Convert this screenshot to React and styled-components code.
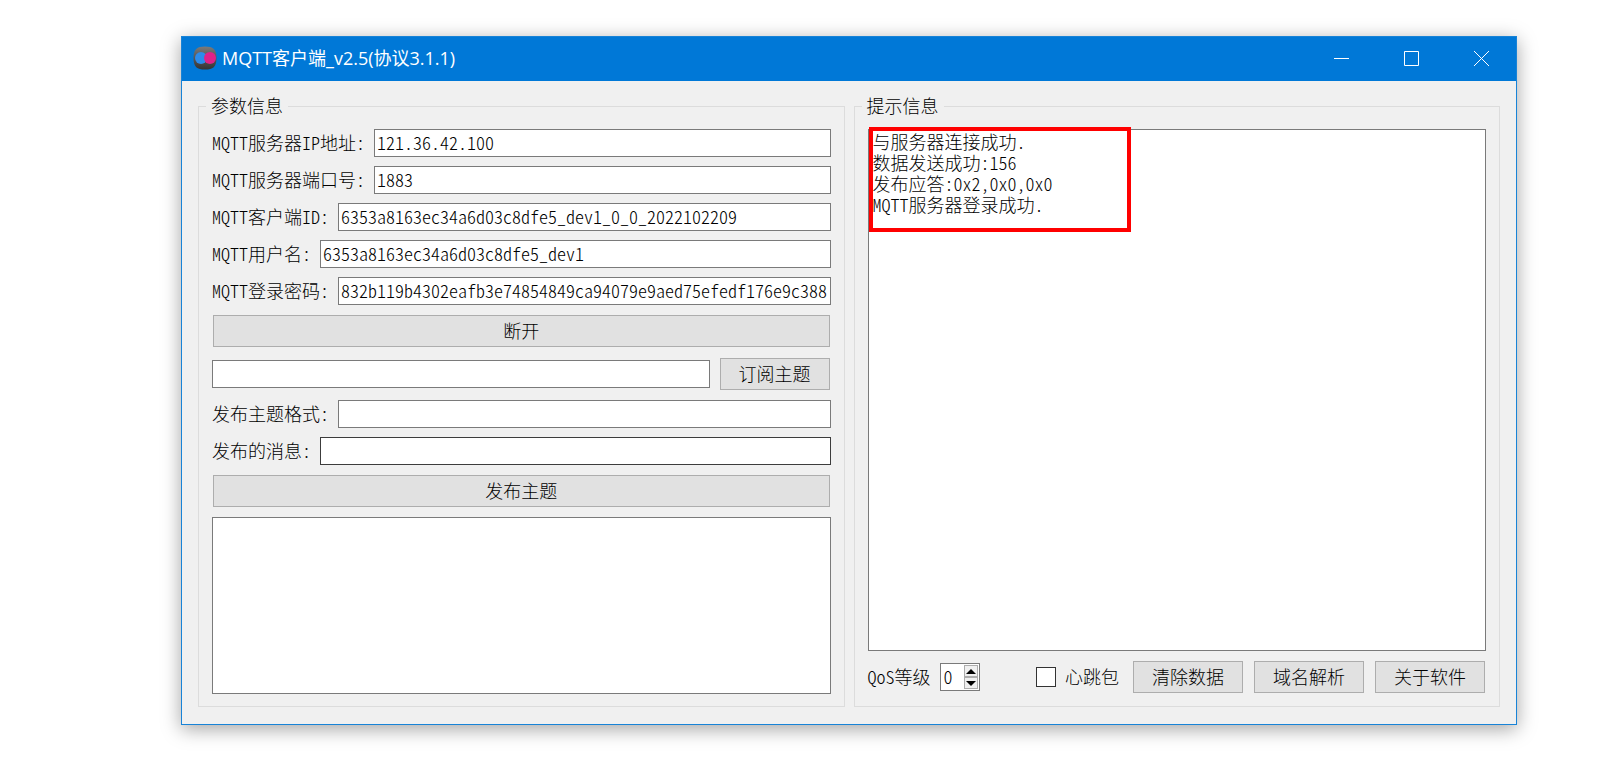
import React from "react";
import styled, { createGlobalStyle } from "styled-components";

const GlobalStyle = createGlobalStyle`
  *, *::before, *::after { box-sizing: border-box; }
  body { margin: 0; background: #fff; }
  button, input, textarea { font: inherit; color: inherit; margin: 0; border-radius: 0; }
`;

const Page = styled.main`
  display: flex;
  min-height: 100vh;
  padding: 36px 98px 38px 181px;
  font: 300 18px/26px "Noto Sans CJK SC", sans-serif;
  font-feature-settings: "hwid";
  color: #000;
`;

const Window = styled.section`
  flex: 1;
  min-width: 0;
  display: flex;
  flex-direction: column;
  border: 1px solid #1883d7;
  background: #f0f0f0;
  box-shadow: 0 4px 18px rgba(0, 0, 0, 0.36);
`;

const TitleBar = styled.header`
  display: flex;
  align-items: stretch;
  height: 44px;
  padding-left: 11px;
  background: #0078d7;
  color: #fff;
`;

const Title = styled.h1`
  flex: 1;
  display: flex;
  align-items: center;
  gap: 5px;
  margin: 0;
  padding-bottom: 2px;
  font: 400 18px/24px "Open Sans", "Noto Sans CJK SC", sans-serif;
  font-feature-settings: normal;
`;

const Controls = styled.div`
  display: flex;
  gap: 1px;
`;

const ControlButton = styled.button`
  display: flex;
  align-items: center;
  justify-content: center;
  width: 69px;
  padding: 0 0 1px;
  border: 0;
  background: none;
`;

const Client = styled.div`
  flex: 1;
  display: grid;
  grid-template-columns: minmax(0, 1fr) minmax(0, 1fr);
  gap: 9px;
  padding: 15px 16px 17px;
`;

const Group = styled.fieldset`
  display: flex;
  flex-direction: column;
  gap: 9px;
  min-width: 0;
  margin: 0;
  padding: 12px 13px;
  border: 1px solid #dcdcdc;
`;

const Legend = styled.legend`
  margin-left: -6px;
  padding: 0 5px 2px;
  line-height: 19px;
`;

const Row = styled.div`
  display: flex;
  align-items: center;
  gap: 9px;
`;

const Label = styled.label`
  flex: none;
  padding-bottom: 2px;
  white-space: nowrap;
`;

const TextInput = styled.input`
  flex: 1;
  min-width: 0;
  height: 28px;
  padding: 0 2px 2px;
  border: 1px solid ${(p) => (p.$active ? "#3c3c3c" : "#7a7a7a")};
  background: #fff;
  outline: none;
`;

const TextArea = styled.textarea`
  display: block;
  flex: 1;
  width: 100%;
  min-height: 120px;
  padding: 1px 4px;
  border: 1px solid #7a7a7a;
  background: #fff;
  line-height: 21px;
  resize: none;
  outline: none;
`;

const PushButton = styled.button`
  flex: none;
  width: ${(p) => (p.$wide ? "auto" : "110px")};
  height: 32px;
  margin: 1px;
  padding: 0 0 2px;
  border: 1px solid #adadad;
  background: #e1e1e1;
`;

const LogFrame = styled.div`
  position: relative;
  flex: 1;
  display: flex;
`;

const Highlight = styled.div`
  position: absolute;
  top: -2px;
  left: 1px;
  width: 262px;
  height: 105px;
  border: 4px solid #f00;
  pointer-events: none;
`;

const SpinBox = styled.div`
  display: flex;
  width: 40px;
  height: 28px;
  padding: 1px;
  border: 1px solid #7a7a7a;
  background: #fff;
`;

const SpinInput = styled.input`
  flex: 1;
  min-width: 0;
  padding: 0 0 2px 2px;
  border: 0;
  background: none;
  outline: none;
  appearance: textfield;
  &::-webkit-inner-spin-button { appearance: none; margin: 0; }
`;

const SpinButtons = styled.div`
  display: flex;
  flex-direction: column;
  width: 14px;
`;

const SpinButton = styled.button`
  flex: 1;
  display: flex;
  align-items: center;
  justify-content: center;
  padding: 0;
  border: 1px solid #adadad;
  background: #f0f0f0;
`;

const CheckLabel = styled.label`
  display: flex;
  align-items: center;
  gap: 9px;
  margin: 0 4px 0 auto;
`;

const CheckText = styled.span`
  padding-bottom: 2px;
`;

const CheckBox = styled.input`
  appearance: none;
  width: 20px;
  height: 20px;
  border: 1px solid #333;
  background: #fff;
  &:checked { background: #0078d7; }
`;

const AppIcon = () => (
  <svg width="24" height="24" viewBox="0 0 24 24" aria-hidden="true">
    <defs>
      <linearGradient id="plate" x1="0" y1="0" x2="0" y2="1">
        <stop offset="0" stopColor="#7a7a7a" />
        <stop offset="1" stopColor="#333" />
      </linearGradient>
    </defs>
    <path d="M12 0.5C20 0.5 23.5 3 23.5 12S20 23.5 12 23.5 0.5 21 0.5 12 4 0.5 12 0.5Z" fill="url(#plate)" />
    <circle cx="8" cy="12" r="6" fill="#2d8ceb" />
    <circle cx="17" cy="12" r="6" fill="#e0218a" />
  </svg>
);

const ControlIcon = ({ d }) => (
  <svg width="15" height="15" viewBox="0 0 15 15" fill="none" stroke="#fff" aria-hidden="true">
    <path d={d} />
  </svg>
);

const Arrow = ({ d }) => (
  <svg width="10" height="5" viewBox="0 0 10 5" aria-hidden="true">
    <path d={d} />
  </svg>
);

const params = [
  ["ip", "MQTT服务器IP地址:", "121.36.42.100"],
  ["port", "MQTT服务器端口号:", "1883"],
  ["client", "MQTT客户端ID:", "6353a8163ec34a6d03c8dfe5_dev1_0_0_2022102209"],
  ["user", "MQTT用户名:", "6353a8163ec34a6d03c8dfe5_dev1"],
  ["password", "MQTT登录密码:", "832b119b4302eafb3e74854849ca94079e9aed75efedf176e9c388"],
];

const log = `与服务器连接成功.
数据发送成功:156
发布应答:0x2,0x0,0x0
MQTT服务器登录成功.`;

const Field = ({ id, label, value = "", active }) => (
  <Row>
    <Label htmlFor={id}>{label}</Label>
    <TextInput id={id} defaultValue={value} $active={active} spellCheck={false} />
  </Row>
);

export default function App() {
  const [qos, setQos] = React.useState(0);
  const step = (n) => setQos((q) => Math.min(2, Math.max(0, q + n)));

  return (
    <Page lang="zh-CN">
      <GlobalStyle />
      <Window>
        <TitleBar>
          <Title>
            <AppIcon />
            <span>MQTT客户端_v2.5(协议3.1.1)</span>
          </Title>
          <Controls>
            <ControlButton aria-label="最小化"><ControlIcon d="M0 7.5H15" /></ControlButton>
            <ControlButton aria-label="最大化"><ControlIcon d="M.5.5h14v14H.5Z" /></ControlButton>
            <ControlButton aria-label="关闭"><ControlIcon d="M0 0 15 15M15 0 0 15" /></ControlButton>
          </Controls>
        </TitleBar>
        <Client>
          <Group>
            <Legend>参数信息</Legend>
            {params.map(([id, label, value]) => (
              <Field key={id} id={id} label={label} value={value} />
            ))}
            <PushButton $wide>断开</PushButton>
            <Row>
              <TextInput aria-label="订阅主题" />
              <PushButton>订阅主题</PushButton>
            </Row>
            <Field id="topic" label="发布主题格式:" />
            <Field id="message" label="发布的消息:" active />
            <PushButton $wide>发布主题</PushButton>
            <TextArea aria-label="消息" />
          </Group>
          <Group>
            <Legend>提示信息</Legend>
            <LogFrame>
              <TextArea aria-label="提示信息" readOnly spellCheck={false} value={log} />
              <Highlight />
            </LogFrame>
            <Row>
              <Label htmlFor="qos">QoS等级</Label>
              <SpinBox>
                <SpinInput
                  id="qos"
                  type="number"
                  min="0"
                  max="2"
                  value={qos}
                  onChange={(e) => setQos(Number(e.target.value))}
                />
                <SpinButtons>
                  <SpinButton aria-label="增加" onClick={() => step(1)}><Arrow d="M0 5 5 0 10 5Z" /></SpinButton>
                  <SpinButton aria-label="减少" onClick={() => step(-1)}><Arrow d="M0 0 5 5 10 0Z" /></SpinButton>
                </SpinButtons>
              </SpinBox>
              <CheckLabel>
                <CheckBox type="checkbox" />
                <CheckText>心跳包</CheckText>
              </CheckLabel>
              <PushButton>清除数据</PushButton>
              <PushButton>域名解析</PushButton>
              <PushButton>关于软件</PushButton>
            </Row>
          </Group>
        </Client>
      </Window>
    </Page>
  );
}
